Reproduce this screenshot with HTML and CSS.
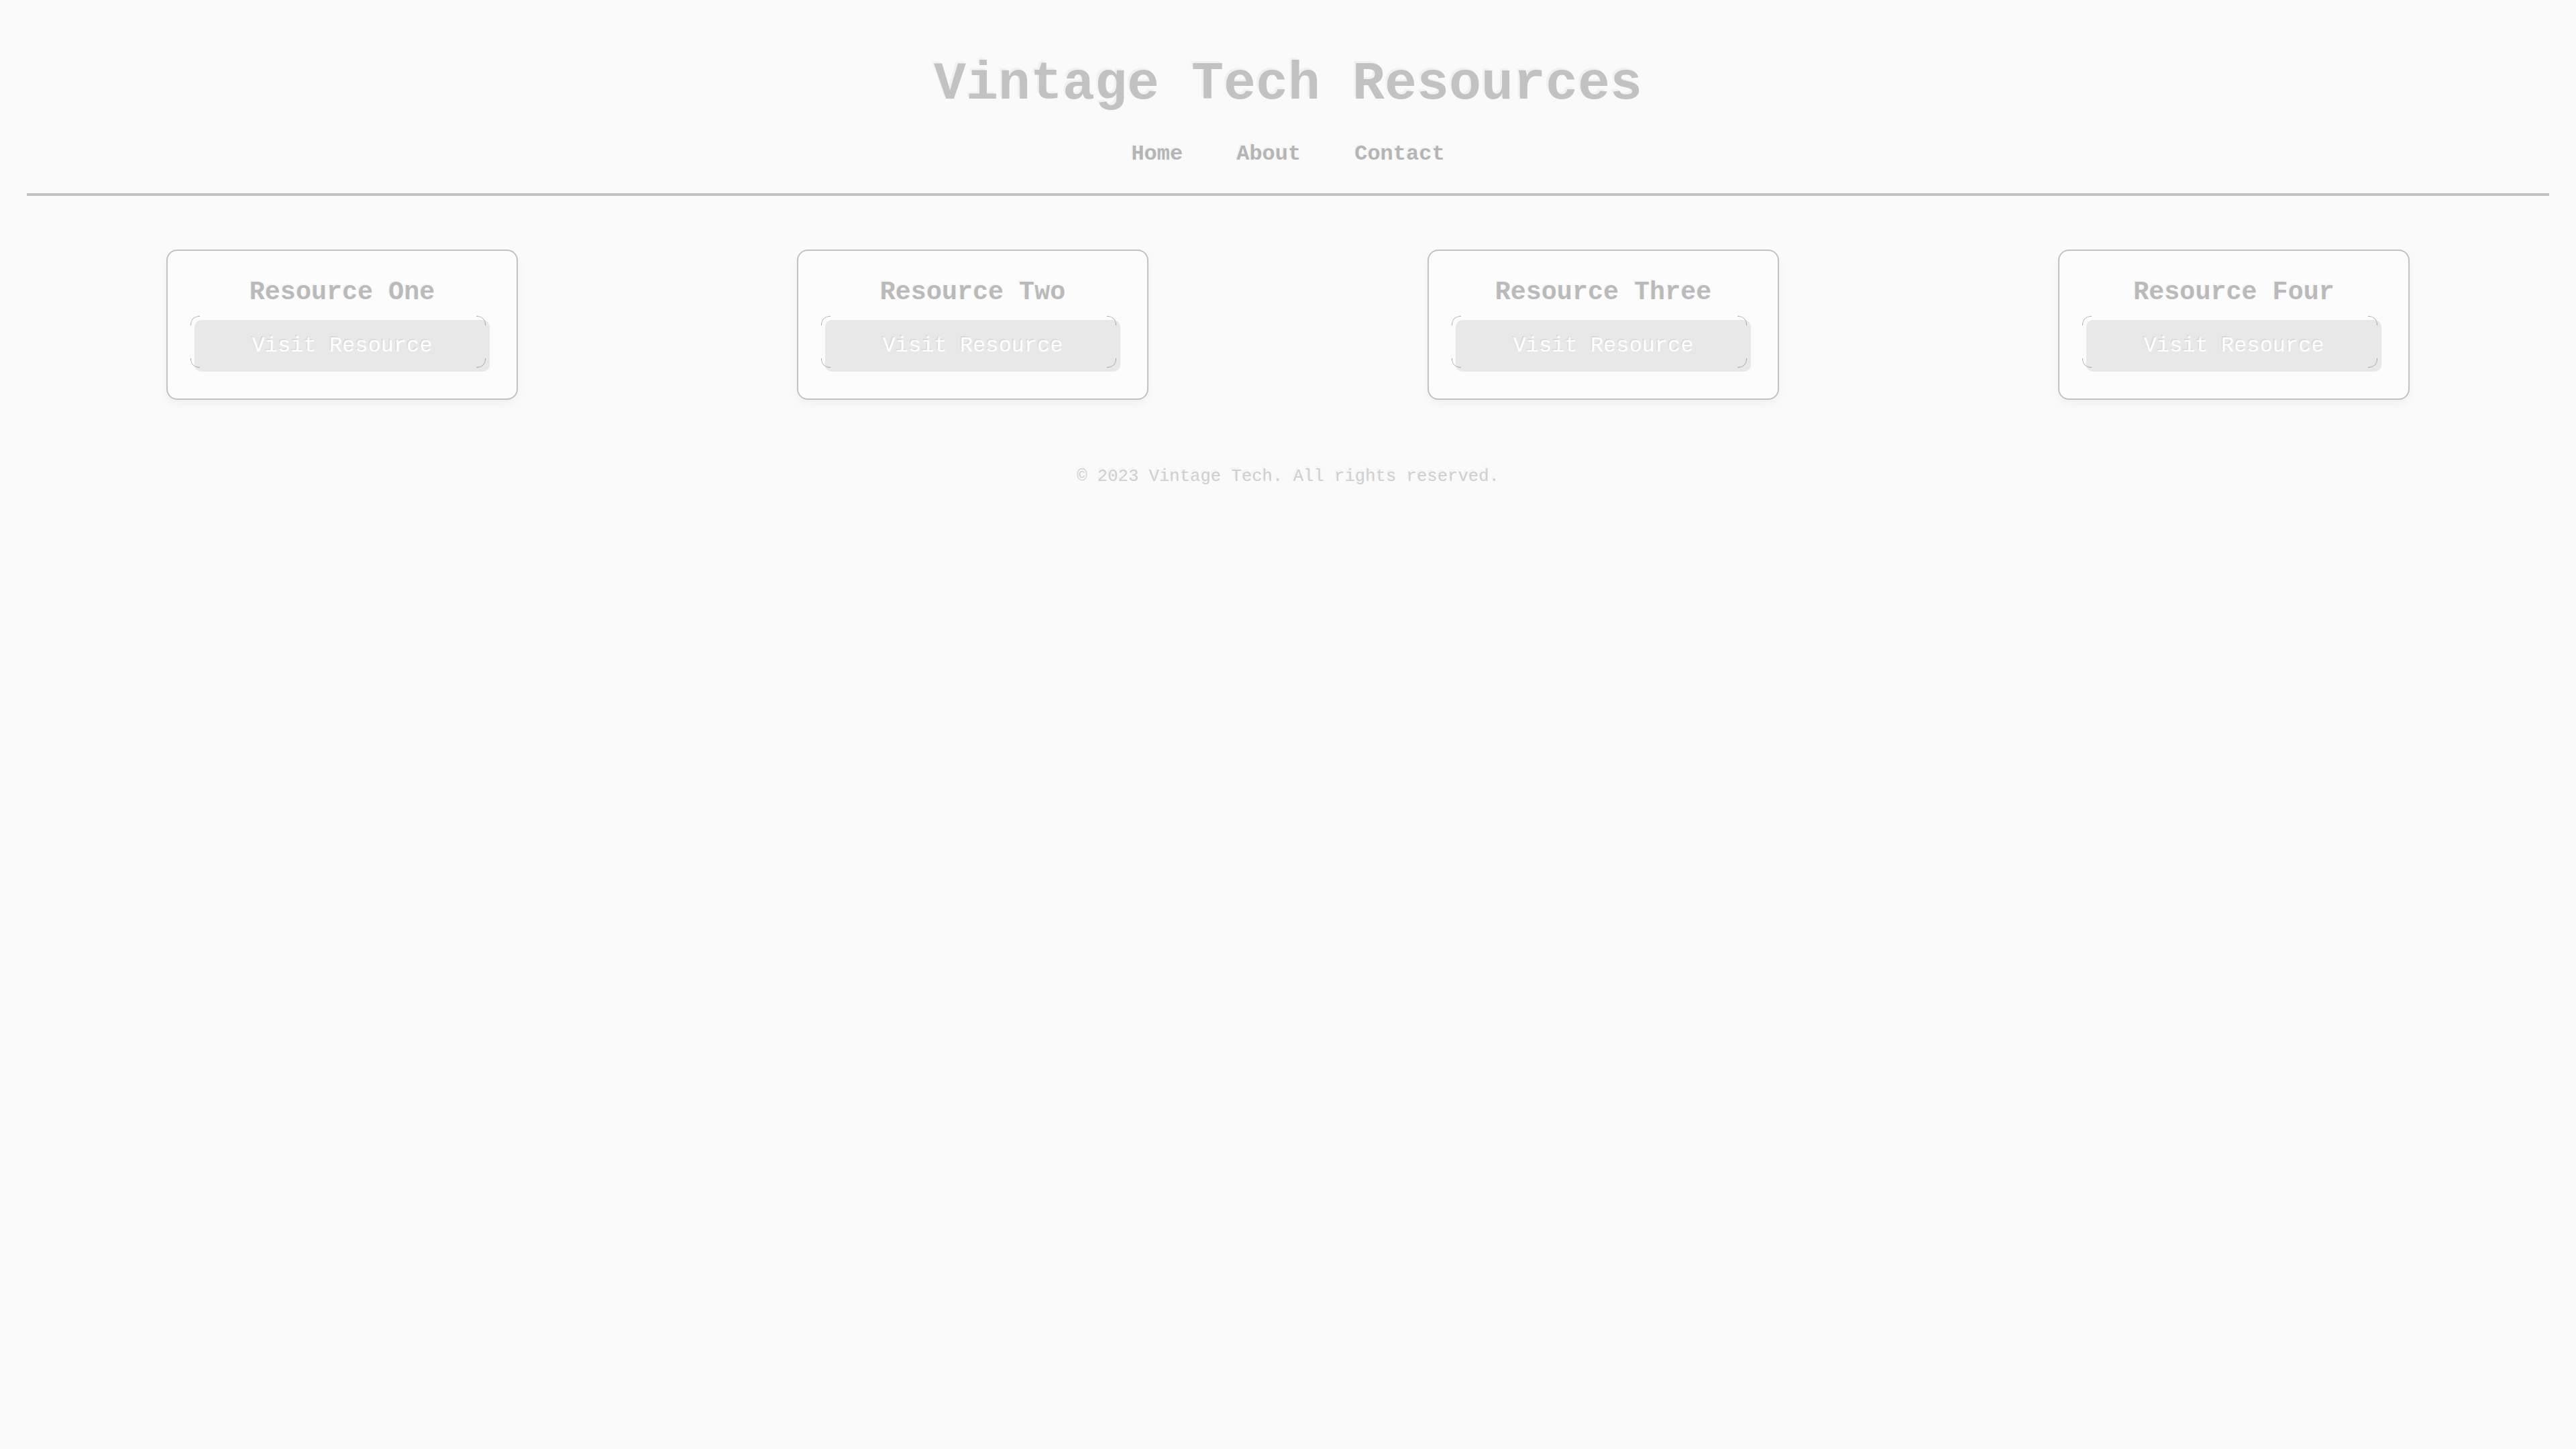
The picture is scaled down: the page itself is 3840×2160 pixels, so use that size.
FILE: index.html
```html
<!DOCTYPE html>
<html lang="en">
<head>
<meta charset="utf-8">
<title>Vintage Tech Resources</title>
<link rel="stylesheet" href="styles.css">
</head>
<body>
<header class="site-header">
  <h1 class="site-title">Vintage Tech Resources</h1>
  <nav class="site-nav">
    <a class="nav-link" href="#">Home</a>
    <a class="nav-link" href="#">About</a>
    <a class="nav-link" href="#">Contact</a>
  </nav>
</header>
<main class="resources">
  <section class="card">
    <h2 class="card-title">Resource One</h2>
    <a class="card-btn" href="#">Visit Resource</a>
  </section>
  <section class="card">
    <h2 class="card-title">Resource Two</h2>
    <a class="card-btn" href="#">Visit Resource</a>
  </section>
  <section class="card">
    <h2 class="card-title">Resource Three</h2>
    <a class="card-btn" href="#">Visit Resource</a>
  </section>
  <section class="card">
    <h2 class="card-title">Resource Four</h2>
    <a class="card-btn" href="#">Visit Resource</a>
  </section>
</main>
<footer class="site-footer">
  <p class="copyright">&copy; 2023 Vintage Tech. All rights reserved.</p>
</footer>
</body>
</html>
```

FILE: styles.css
```css
html, body {
  margin: 0;
  padding: 0;
}

body {
  background: #fafafa;
  color: #bdbdbd;
  font-family: "Courier New", Courier, "Nimbus Mono PS", "FreeMono", "Liberation Mono", monospace;
  font-size: 32px;
}

.site-header {
  margin: 0 40px;
  padding: 80px 0 40px;
  text-align: center;
  border-bottom: 4px solid #c0c0c0;
}

.site-title {
  margin: 0 0 40px;
  font-size: 80px;
  font-weight: bold;
  color: #c2c2c2;
  text-shadow: -3px -3px 0 rgba(0, 0, 0, 0.035);
}

.site-nav {
  display: flex;
  justify-content: center;
}

.nav-link {
  margin: 0 40px;
  color: #b5b5b5;
  font-weight: bold;
  text-decoration: none;
  text-shadow: -2px -2px 0 rgba(0, 0, 0, 0.035);
}

.resources {
  display: grid;
  grid-template-columns: repeat(4, 1fr);
  justify-items: center;
  margin: 0 40px;
  padding: 80px 0;
}

.card {
  box-sizing: border-box;
  width: 524px;
  padding: 40px;
  background: #fcfcfc;
  border: 2px solid #c2c2c2;
  border-radius: 16px;
  box-shadow: 0 6px 12px rgba(0, 0, 0, 0.04);
  text-align: center;
}

.card-title {
  margin: 0 0 19px;
  font-size: 38.4px;
  font-weight: bold;
  color: #bababa;
  text-shadow: -2px -2px 0 rgba(0, 0, 0, 0.035);
}

.card-btn {
  position: relative;
  display: block;
  padding: 20px;
  background: #e8e8e8;
  color: #ffffff;
  border-radius: 10px;
  font-size: 32px;
  text-decoration: none;
  text-shadow: -2px -2px 0 rgba(0, 0, 0, 0.06);
}

.card-btn::before {
  content: "";
  position: absolute;
  inset: 0;
  transform: translate(-6px, -6px);
  border: 1px solid rgba(110, 110, 110, 0.55);
  border-radius: 12px;
  -webkit-mask:
    linear-gradient(#000 0 0) top left / 14px 14px no-repeat,
    linear-gradient(#000 0 0) top right / 14px 14px no-repeat,
    linear-gradient(#000 0 0) bottom left / 14px 14px no-repeat,
    linear-gradient(#000 0 0) bottom right / 14px 14px no-repeat;
  mask:
    linear-gradient(#000 0 0) top left / 14px 14px no-repeat,
    linear-gradient(#000 0 0) top right / 14px 14px no-repeat,
    linear-gradient(#000 0 0) bottom left / 14px 14px no-repeat,
    linear-gradient(#000 0 0) bottom right / 14px 14px no-repeat;
}

.site-footer {
  padding: 20px 0;
  text-align: center;
}

.copyright {
  margin: 0;
  font-size: 25.6px;
  color: #cfcfcf;
  text-shadow: -2px -3px 0 rgba(0, 0, 0, 0.035);
}
```
